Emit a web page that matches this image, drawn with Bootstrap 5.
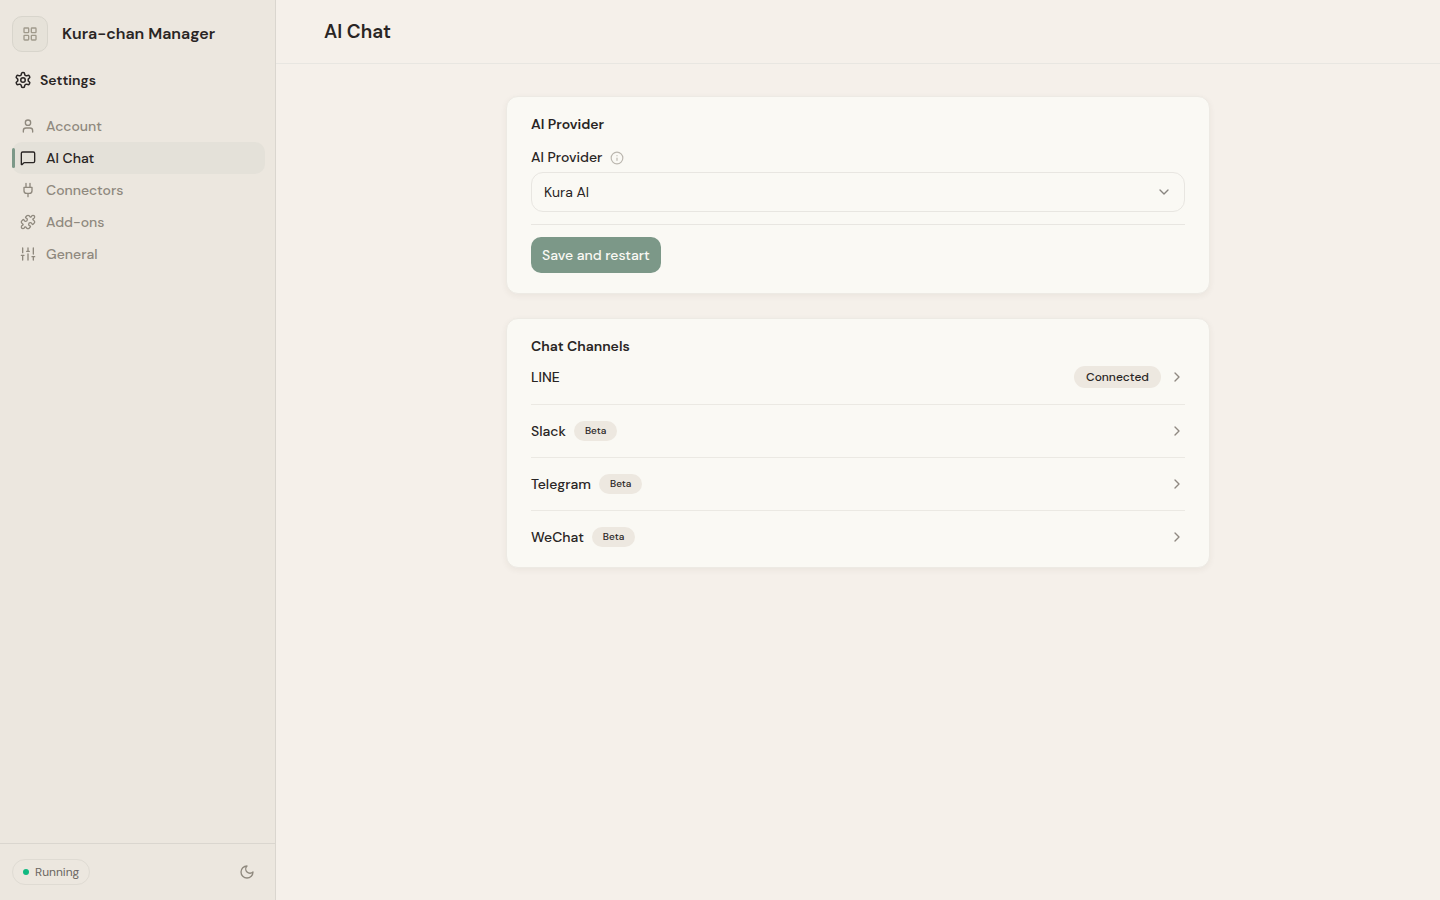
<!DOCTYPE html>
<html lang="en">
<head>
<meta charset="utf-8">
<meta name="viewport" content="width=device-width, initial-scale=1">
<title>Kura-chan Manager</title>
<link href="https://cdn.jsdelivr.net/npm/bootstrap@5.3.0/dist/css/bootstrap.min.css" rel="stylesheet">
<style>
  :root { --ink: #292524; --muted: #8f897e; --line: #dad6cf; --hair: #e8e6e1; --sage: #7c9888; --sand: #ece7df; }
  body { font-family: "DM Sans", Inter, sans-serif; font-size: 14px; line-height: 21px; color: var(--ink); background: #f5f0ea; }
  svg { fill: none; stroke: currentColor; stroke-width: 2; stroke-linecap: round; stroke-linejoin: round; flex: none; display: block; }
  .sidebar { width: 276px; background: var(--sand); border-right: 1px solid var(--line); }
  .app-btn { width: 36px; height: 36px; border: 1px solid #d8d5cc; border-radius: 10px; background: #e6e2d9; color: #a09a8c; }
  .brand-row { padding: 16px 12px 0; gap: 14px; }
  .brand { font-size: 16px; font-weight: 600; line-height: 24px; }
  .section-name { font-size: 14px; font-weight: 600; line-height: 20px; padding: 18px 14px 20px; }
  .side-nav { padding: 0 10px 0 12px; }
  .side-link { height: 32px; padding: 0 8px; gap: 10px; border-radius: 10px; color: var(--muted); font-weight: 500; position: relative; }
  .side-link:hover { color: var(--ink); }
  .side-link.active { background: #e4e1d9; color: var(--ink); }
  .side-link.active::before { content: ""; position: absolute; left: 0; top: 6px; bottom: 6px; width: 3px; border-radius: 2px; background: var(--sage); }
  .side-foot { border-top: 1px solid var(--line); padding: 15px 12px; }
  .status { font-size: 12px; line-height: 16px; gap: 6px; color: #6b665f; border: 1px solid #dfdbd3; padding: 4px 10px; }
  .status-dot { width: 6px; height: 6px; background: #10b981; }
  .theme-btn { width: 32px; height: 26px; color: var(--muted); }
  .topbar { height: 64px; padding: 0 48px; border-bottom: 1px solid var(--hair); }
  .topbar h1 { font-size: 19px; line-height: 30px; font-weight: 600; }
  .panes { max-width: 704px; }
  .pane { background: #faf9f4; border: 1px solid #edeae4; border-radius: 12px; padding: 16px 24px 20px; box-shadow: 0 2px 6px rgba(60, 45, 30, .06); }
  .pane h2 { font-size: 14px; line-height: 22px; font-weight: 600; }
  .pane label { font-weight: 500; }
  .field-head { margin: 12px 0 4px; }
  .info-btn { color: #bbb7af; }
  .provider { height: 40px; padding: 0 40px 0 12px; font-size: 14px; color: var(--ink); border: 1px solid var(--hair); border-radius: 12px;
    background: #faf9f4 url("data:image/svg+xml,%3Csvg xmlns='http://www.w3.org/2000/svg' viewBox='0 0 24 24' fill='none' stroke='%23898580' stroke-width='2' stroke-linecap='round' stroke-linejoin='round'%3E%3Cpath d='m6 9 6 6 6-6'/%3E%3C/svg%3E") no-repeat right 12px center / 16px; }
  .save-row { border-top: 1px solid var(--hair); margin-top: 12px; padding-top: 12px; }
  .save { height: 36px; padding: 0 11px; font-size: 14px; font-weight: 500; line-height: 20px; border-radius: 10px; background: var(--sage); color: #faf9f4; }
  .save:hover { background: #6c8878; color: #fff; }
  .channel { padding: 16px 0; font-weight: 500; line-height: 20px; color: var(--ink); border-top: 1px solid #ebe9e3; }
  .channel:first-child { padding-top: 9px; border-top: 0; }
  .channel:last-child { padding-bottom: 0; }
  .channel svg { color: #8f8881; }
  .tag { background: #ede8e0; border-radius: 11px; padding: 0 11px; font-weight: 500; }
  .tag-sm { font-size: 10px; line-height: 20px; }
  .tag-md { font-size: 12px; line-height: 22px; padding: 0 12px; }
</style>
</head>
<body>
<div class="d-flex min-vh-100">
  <aside class="sidebar d-flex flex-column flex-shrink-0">
    <div class="brand-row d-flex align-items-center">
      <button type="button" class="app-btn btn p-0 d-flex align-items-center justify-content-center" aria-label="Apps">
        <svg width="16" height="16" viewBox="0 0 24 24"><rect x="3" y="3" width="7" height="7" rx="1"/><rect x="14" y="3" width="7" height="7" rx="1"/><rect x="14" y="14" width="7" height="7" rx="1"/><rect x="3" y="14" width="7" height="7" rx="1"/></svg>
      </button>
      <span class="brand">Kura-chan Manager</span>
    </div>
    <div class="section-name d-flex align-items-center gap-2">
      <svg width="18" height="18" viewBox="0 0 24 24"><path d="M12.22 2h-.44a2 2 0 0 0-2 2v.18a2 2 0 0 1-1 1.73l-.43.25a2 2 0 0 1-2 0l-.15-.08a2 2 0 0 0-2.73.73l-.22.38a2 2 0 0 0 .73 2.73l.15.1a2 2 0 0 1 1 1.72v.51a2 2 0 0 1-1 1.74l-.15.09a2 2 0 0 0-.73 2.73l.22.38a2 2 0 0 0 2.73.73l.15-.08a2 2 0 0 1 2 0l.43.25a2 2 0 0 1 1 1.73V20a2 2 0 0 0 2 2h.44a2 2 0 0 0 2-2v-.18a2 2 0 0 1 1-1.73l.43-.25a2 2 0 0 1 2 0l.15.08a2 2 0 0 0 2.73-.73l.22-.39a2 2 0 0 0-.73-2.73l-.15-.08a2 2 0 0 1-1-1.74v-.5a2 2 0 0 1 1-1.74l.15-.09a2 2 0 0 0 .73-2.73l-.22-.38a2 2 0 0 0-2.73-.73l-.15.08a2 2 0 0 1-2 0l-.43-.25a2 2 0 0 1-1-1.73V4a2 2 0 0 0-2-2z"/><circle cx="12" cy="12" r="3"/></svg>
      <span>Settings</span>
    </div>
    <nav class="side-nav nav flex-column flex-nowrap flex-grow-1" aria-label="Settings">
      <a href="#account" class="side-link text-decoration-none d-flex align-items-center"><svg width="16" height="16" viewBox="0 0 24 24"><path d="M19 21v-2a4 4 0 0 0-4-4H9a4 4 0 0 0-4 4v2"/><circle cx="12" cy="7" r="4"/></svg>Account</a>
      <a href="#chat" aria-current="page" class="side-link active text-decoration-none d-flex align-items-center"><svg width="16" height="16" viewBox="0 0 24 24"><path d="M22 17a2 2 0 0 1-2 2H6.828a2 2 0 0 0-1.414.586l-2.202 2.202A.71.71 0 0 1 2 21.286V5a2 2 0 0 1 2-2h16a2 2 0 0 1 2 2z"/></svg>AI Chat</a>
      <a href="#connectors" class="side-link text-decoration-none d-flex align-items-center"><svg width="16" height="16" viewBox="0 0 24 24"><path d="M12 22v-5M9 8V2M15 8V2M18 8v5a4 4 0 0 1-4 4h-4a4 4 0 0 1-4-4V8Z"/></svg>Connectors</a>
      <a href="#addons" class="side-link text-decoration-none d-flex align-items-center"><svg width="16" height="16" viewBox="0 0 24 24"><path d="M15.39 4.39a1 1 0 0 0 1.68-.474 2.5 2.5 0 1 1 3.014 3.015 1 1 0 0 0-.474 1.68l1.683 1.682a2.414 2.414 0 0 1 0 3.414L19.61 15.39a1 1 0 0 1-1.68-.474 2.5 2.5 0 1 0-3.014 3.015 1 1 0 0 1 .474 1.68l-1.683 1.682a2.414 2.414 0 0 1-3.414 0L8.61 19.61a1 1 0 0 0-1.68.474 2.5 2.5 0 1 1-3.014-3.015 1 1 0 0 0 .474-1.68l-1.683-1.682a2.414 2.414 0 0 1 0-3.414L4.39 8.61a1 1 0 0 1 1.68.474 2.5 2.5 0 1 0 3.014-3.015 1 1 0 0 1-.474-1.68l1.683-1.682a2.414 2.414 0 0 1 3.414 0z"/></svg>Add-ons</a>
      <a href="#general" class="side-link text-decoration-none d-flex align-items-center"><svg width="16" height="16" viewBox="0 0 24 24"><path d="M4 21v-7M4 10V3M12 21v-9M12 8V3M20 21v-5M20 12V3M2 14h4M10 8h4M18 16h4"/></svg>General</a>
    </nav>
    <div class="side-foot d-flex align-items-center justify-content-between">
      <span class="status rounded-pill d-inline-flex align-items-center"><span class="status-dot rounded-circle"></span>Running</span>
      <button type="button" class="theme-btn btn p-0 border-0 d-flex align-items-center justify-content-center" aria-label="Toggle theme">
        <svg width="16" height="16" viewBox="0 0 24 24"><path d="M12 3a6 6 0 0 0 9 9 9 9 0 1 1-9-9Z"/></svg>
      </button>
    </div>
  </aside>
  <main class="flex-grow-1">
    <header class="topbar d-flex align-items-center"><h1 class="m-0">AI Chat</h1></header>
    <div class="panes mx-auto d-flex flex-column gap-4 mt-2 pt-4">
      <section class="pane">
        <h2 class="m-0">AI Provider</h2>
        <div class="field-head d-flex align-items-center gap-2">
          <label for="provider">AI Provider</label>
          <button type="button" class="info-btn btn p-0 border-0" aria-label="About AI Provider"><svg width="14" height="14" viewBox="0 0 24 24"><circle cx="12" cy="12" r="10"/><path d="M12 16v-4M12 8h.01"/></svg></button>
        </div>
        <select id="provider" class="provider form-select"><option>Kura AI</option></select>
        <div class="save-row d-flex"><button type="button" class="save btn border-0">Save and restart</button></div>
      </section>
      <section class="pane">
        <h2 class="m-0">Chat Channels</h2>
        <div>
          <a href="#line" class="channel text-decoration-none d-flex align-items-center gap-2">LINE<span class="tag tag-md ms-auto">Connected</span><svg width="16" height="16" viewBox="0 0 24 24"><path d="m9 18 6-6-6-6"/></svg></a>
          <a href="#slack" class="channel text-decoration-none d-flex align-items-center gap-2">Slack<span class="tag tag-sm">Beta</span><svg class="ms-auto" width="16" height="16" viewBox="0 0 24 24"><path d="m9 18 6-6-6-6"/></svg></a>
          <a href="#telegram" class="channel text-decoration-none d-flex align-items-center gap-2">Telegram<span class="tag tag-sm">Beta</span><svg class="ms-auto" width="16" height="16" viewBox="0 0 24 24"><path d="m9 18 6-6-6-6"/></svg></a>
          <a href="#wechat" class="channel text-decoration-none d-flex align-items-center gap-2">WeChat<span class="tag tag-sm">Beta</span><svg class="ms-auto" width="16" height="16" viewBox="0 0 24 24"><path d="m9 18 6-6-6-6"/></svg></a>
        </div>
      </section>
    </div>
  </main>
</div>
<script src="https://cdn.jsdelivr.net/npm/bootstrap@5.3.0/dist/js/bootstrap.bundle.min.js"></script>
</body>
</html>
